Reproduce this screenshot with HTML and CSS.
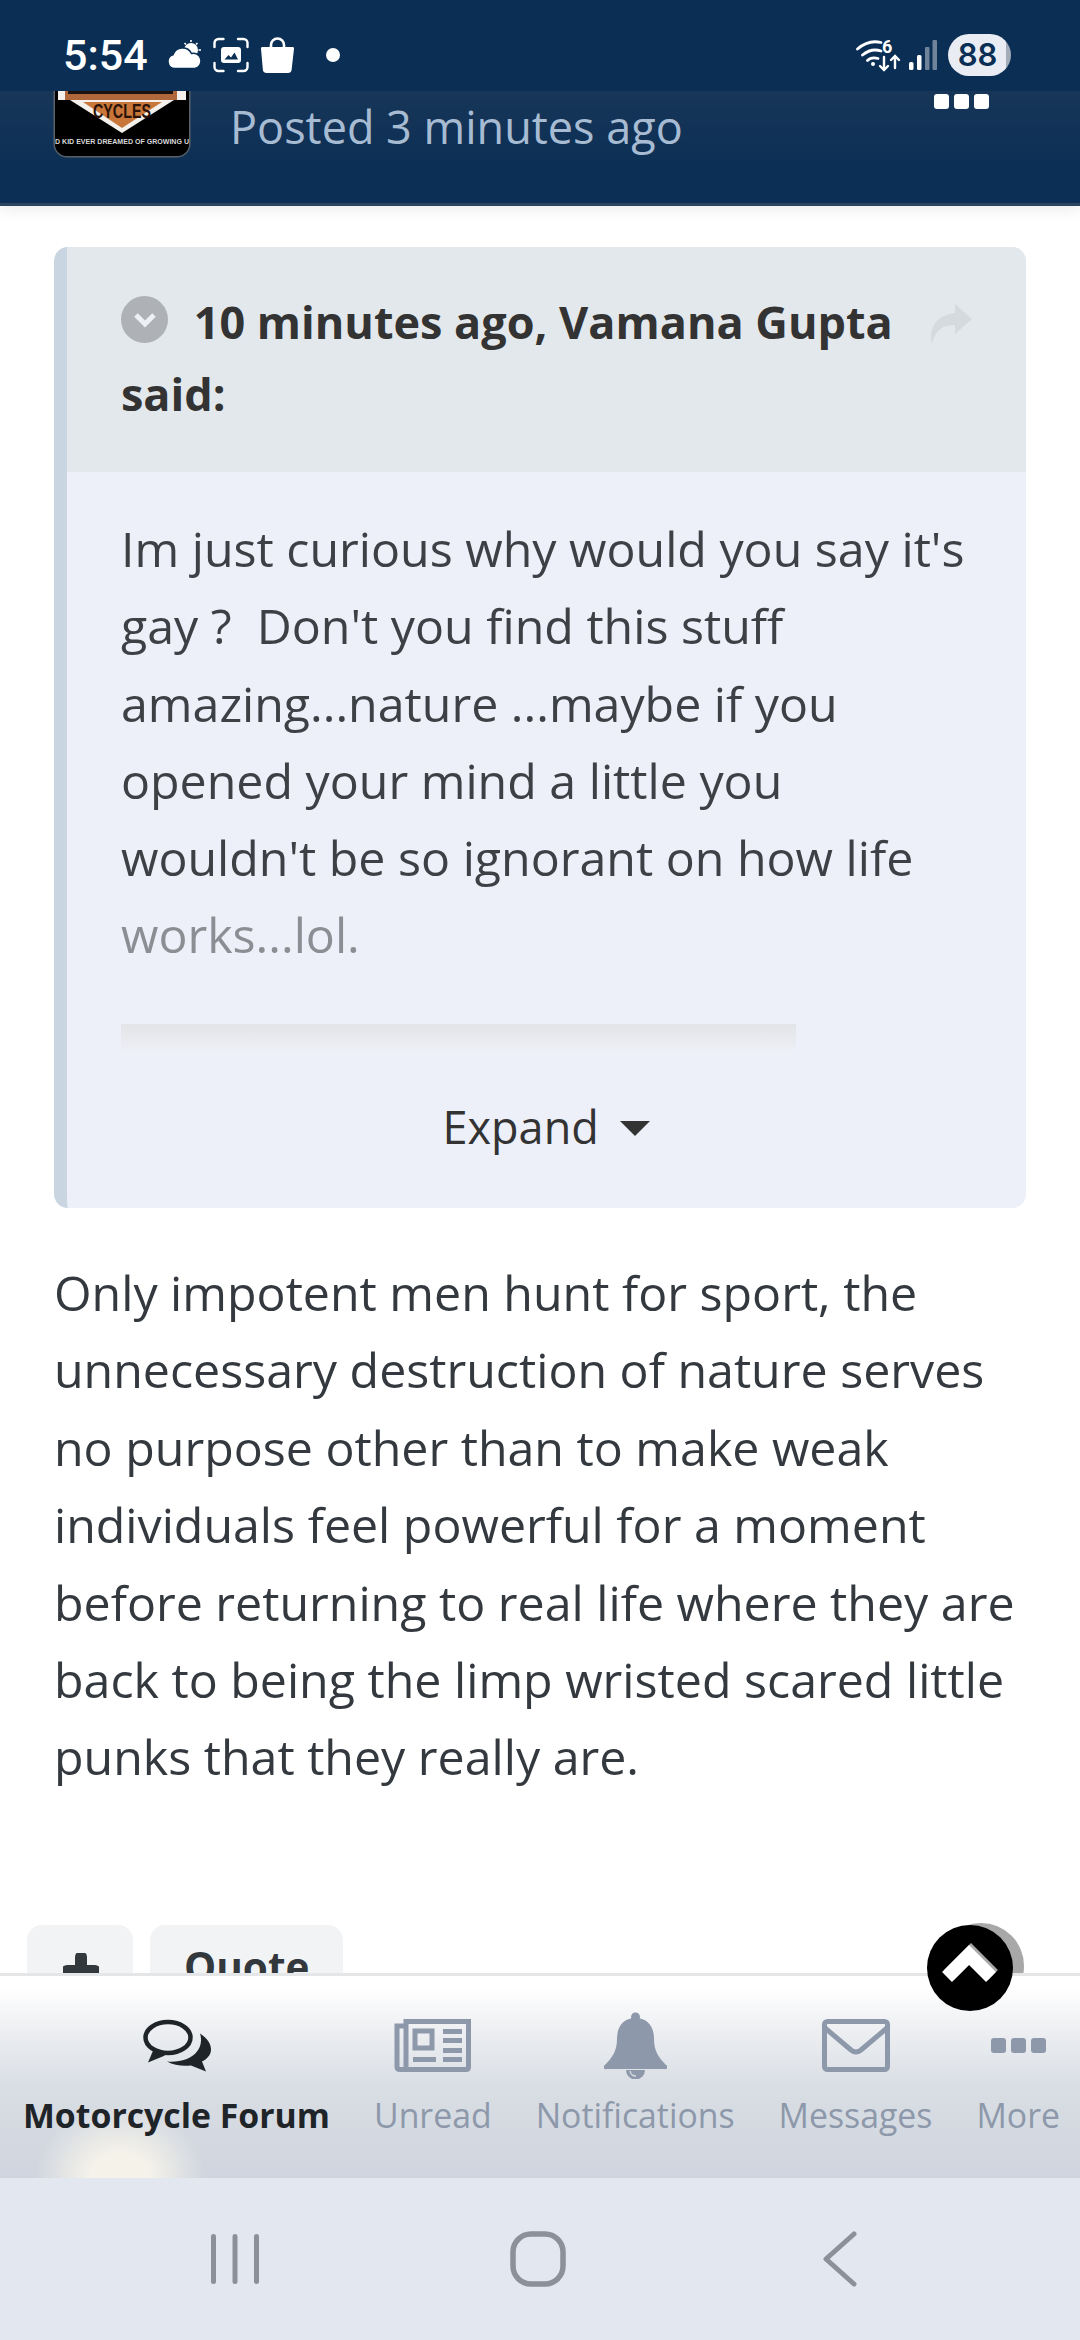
FILE: index.html

```html
<!DOCTYPE html>
<html lang="en">
<head>
  <meta charset="UTF-8">
  <title>Motorcycle Forum</title>
  <link rel="stylesheet" href="styles.css">
</head>
<body>
  <div class="status-bar">
    <span class="status-time">5:54</span>
    <svg class="st-cloud" width="34" height="30" viewBox="0 0 34 30">
      <circle cx="23" cy="10" r="7" fill="#fff"/>
      <path d="M23 0v2M29.500 3l-1.500 1.500M33 10h-2.500M31 17l-2-1.500M16.500 3L18 4.500" stroke="#fff" stroke-width="1.600" fill="none"/>
      <path d="M7 28.500A7 7 0 0 1 5 14.800A10 10 0 0 1 23.500 13.500A7.500 7.500 0 0 1 27 28.500Z" fill="#fff" stroke="#0a2e54" stroke-width="1.500"/>
    </svg>
    <svg class="st-scan" width="36" height="36" viewBox="0 0 36 36" fill="none">
      <path d="M1.500 10V6a4 4 0 0 1 4-4h5M25 2h5.500a4 4 0 0 1 4 4v4M34.500 26v4a4 4 0 0 1-4 4H25M10.500 34h-5a4 4 0 0 1-4-4v-4" stroke="#fff" stroke-width="2.400" stroke-linecap="round"/>
      <rect x="8" y="10" width="20" height="16" rx="3" fill="#fff"/>
      <path d="M11.500 22.500l4-4.500 2.500 2.500 3.500-5 3.500 7z" fill="#0a2e54"/>
    </svg>
    <svg class="st-bag" width="33" height="36" viewBox="0 0 33 36">
      <path d="M10 11V8a6.500 6.500 0 0 1 13 0v3" fill="none" stroke="#fff" stroke-width="2.600"/>
      <path d="M1.500 10h30a1.500 1.500 0 0 1 1.500 1.700l-2.300 20.300a4 4 0 0 1-4 4H5.800a4 4 0 0 1-4-4L0 11.700A1.500 1.500 0 0 1 1.500 10z" fill="#fff"/>
    </svg>
    <span class="status-dot"></span>
    <span class="status-right">
      <svg width="45" height="34" viewBox="0 0 45 34" fill="none" stroke="#fff" stroke-linecap="round">
        <path d="M1.500 11C9 4.500 17 2.500 25 4.500M6.500 17C12 12.500 19 11 25 13M11.500 22.500C14 20 18 19.500 22 20.500" stroke-width="2.800"/>
        <circle cx="17" cy="26" r="2" fill="#fff" stroke="none"/>
        <path d="M28 19v13M24 28l4 4 4-4M39 30V18M35 22l4-4 4 4" stroke-width="2.400"/>
        <text x="26" y="15" class="wifi-six">6</text>
      </svg>
      <svg class="st-signal" width="28" height="30" viewBox="0 0 28 30">
        <rect x="0" y="22" width="4.500" height="8" rx="1.500" fill="#fff"/>
        <rect x="8" y="15" width="4.500" height="15" rx="1.500" fill="#fff"/>
        <rect x="16" y="7" width="4.500" height="23" rx="1" fill="#6f839a"/>
        <rect x="23.500" y="0" width="4.500" height="30" rx="1" fill="#6f839a"/>
      </svg>
      <span class="battery">88</span>
    </span>
  </div>

  <header class="post-head">
    <svg class="avatar" width="134" height="134" viewBox="0 0 134 134">
      <rect width="134" height="134" fill="#000"/>
      <path d="M3 60H131V78H119L67 111 15 78H3z" fill="#f4f1ec"/>
      <rect x="10" y="60" width="112" height="18" fill="#b0673c"/>
      <rect x="13" y="60" width="105" height="12" fill="#1b1310"/>
      <path d="M28 80H107L67 106z" fill="#c8763a"/>
      <text x="38" y="96" class="avatar-cycles" textLength="58" lengthAdjust="spacingAndGlyphs">CYCLES</text>
      <text x="0" y="122" class="avatar-tag" textLength="134" lengthAdjust="spacingAndGlyphs">D KID EVER DREAMED OF GROWING U</text>
    </svg>
    <span class="posted">Posted 3 minutes ago</span>
    <span class="dots dots-white"><i></i><i></i><i></i></span>
  </header>

  <main class="content">
    <span class="scroll-shade"></span>
    <blockquote class="quote">
      <div class="quote-head">
        <span class="quote-toggle">
          <svg width="24" height="16" viewBox="0 0 24 16"><path d="M3 3l9 9 9-9" fill="none" stroke="#eef0f3" stroke-width="5"/></svg>
        </span>
        <strong>10 minutes ago, Vamana Gupta said:</strong>
        <svg class="quote-share" width="44" height="40" viewBox="0 0 44 40"><path d="M27 0l17 15-17 15v-9C15 21 7 26 4 40 0 24 9 11 27 9z" fill="#d5dade"/></svg>
      </div>
      <div class="quote-body">
        <p>Im just curious why would you say it's gay ?&nbsp; Don't you find this stuff amazing...nature ...maybe if you opened your mind a little you wouldn't be so ignorant on how life <span class="faded">works...lol.</span></p>
        <div class="embed-stub"></div>
        <div class="expand">Expand <i class="caret"></i></div>
      </div>
    </blockquote>

    <p class="post-text">Only impotent men hunt for sport, the unnecessary destruction of nature serves no purpose other than to make weak individuals feel powerful for a moment before returning to real life where they are back to being the limp wristed scared little punks that they really are.</p>

    <div class="actions">
      <span class="btn btn-plus">
        <svg width="36" height="36" viewBox="0 0 36 36"><path d="M12 4a6 6 0 0 1 12 0v8h8a6 6 0 0 1 0 12h-8v8a6 6 0 0 1-12 0v-8H4a6 6 0 0 1 0-12h8z" fill="#33383d"/></svg>
      </span>
      <span class="btn">Quote</span>
    </div>
  </main>

  <nav class="tabs">
    <a class="tab tab-active">
      <svg width="68" height="52" viewBox="0 0 68 52">
        <ellipse cx="25" cy="18" rx="22.500" ry="15.500" fill="none" stroke="#1f2429" stroke-width="4.500"/>
        <path d="M11 29L5 43 22 36z" fill="#1f2429"/>
        <path d="M57 14C65 19 68 25 68 30 68 36 63 40 59 42L63 52 48 46C40 47 31 46 24 42 36 43 48 40 54 32 58 27 59 20 57 14z" fill="#1f2429"/>
      </svg>
      <span>Motorcycle Forum</span>
    </a>
    <a class="tab">
      <svg width="77" height="53" viewBox="0 0 77 53" fill="#8d98aa">
        <path d="M11 7H3V47.500Q3 50.500 6 50.500H72Q74.500 50.500 74.500 48V2.500H12V48" fill="none" stroke="#8d98aa" stroke-width="5"/>
        <rect x="21" y="12" width="17" height="17" fill="none" stroke="#8d98aa" stroke-width="5"/>
        <rect x="49" y="10" width="19" height="5"/>
        <rect x="49" y="19" width="19" height="5"/>
        <rect x="49" y="29" width="19" height="5"/>
        <rect x="49" y="38" width="19" height="5"/>
        <rect x="19" y="38" width="23" height="5"/>
      </svg>
      <span>Unread</span>
    </a>
    <a class="tab">
      <svg width="63" height="67" viewBox="0 0 63 67" fill="#8d98aa">
        <circle cx="31.500" cy="5" r="4.500"/>
        <path d="M31.500 6C44 6 50 15 50 27 50 39 55 46 62 53A2 2 0 0 1 60.500 57H2.500A2 2 0 0 1 1 53C8 46 13 39 13 27 13 15 19 6 31.500 6z"/>
        <path d="M22 58H41A9.500 9.500 0 0 1 22 58z"/>
        <path d="M26 59A6 6 0 0 0 32 64" fill="none" stroke="#d8dde4" stroke-width="1.500"/>
      </svg>
      <span>Notifications</span>
    </a>
    <a class="tab">
      <svg width="68" height="53" viewBox="0 0 68 53" fill="none" stroke="#8d98aa" stroke-width="5">
        <rect x="2.500" y="2.500" width="63" height="48" rx="3"/>
        <path d="M3 9L29 31Q34 35 39 31L65 9"/>
      </svg>
      <span>Messages</span>
    </a>
    <a class="tab">
      <span class="tab-icon-box"><span class="dots dots-grey"><i></i><i></i><i></i></span></span>
      <span>More</span>
    </a>
  </nav>

  <div class="system-nav">
    <svg width="50" height="52" viewBox="0 0 50 52" fill="#8b9099">
      <rect x="0" y="1" width="5" height="50" rx="2.500"/>
      <rect x="21.500" y="1" width="5" height="50" rx="2.500"/>
      <rect x="43" y="1" width="5" height="50" rx="2.500"/>
    </svg>
    <svg width="56" height="56" viewBox="0 0 56 56" fill="none" stroke="#8b9099" stroke-width="5.500">
      <rect x="3" y="3" width="50" height="50" rx="18"/>
    </svg>
    <svg width="36" height="56" viewBox="0 0 36 56" fill="none" stroke="#8b9099" stroke-width="5" stroke-linecap="round" stroke-linejoin="round">
      <path d="M32 3L4 28 32 53" />
    </svg>
  </div>

  <span class="scroll-top">
    <svg width="86" height="86" viewBox="0 0 86 86" fill="none" stroke-width="14">
      <path d="M22 50L44 28 66 50" stroke="#a8a8a8"/>
      <path d="M20 52L42 30 64 52" stroke="#fff"/>
    </svg>
  </span>
</body>
</html>
```

FILE: styles.css

```css
* {
  box-sizing: border-box;
}
body {
  margin: 0;
  width: 1080px;
  height: 2340px;
  position: relative;
  overflow: hidden;
  display: flex;
  flex-direction: column;
  background: #fff;
  color: #353c41;
  font-family: "Open Sans", sans-serif;
}

/* status bar */
.status-bar {
  height: 91px;
  flex: none;
  display: flex;
  align-items: center;
  padding: 19px 69px 0 63px;
  background: #0a2e54;
  position: relative;
  z-index: 2;
}
.status-time {
  font-family: Roboto, sans-serif;
  font-weight: 500;
  font-size: 43px;
  color: #fff;
  width: 105px;
}
.st-scan {
  margin-left: 11px;
}
.st-bag {
  margin-left: 12px;
}
.status-dot {
  width: 14px;
  height: 14px;
  border-radius: 50%;
  background: #fff;
  margin-left: 32px;
}
.status-right {
  margin-left: auto;
  display: flex;
  align-items: center;
}
.st-signal {
  margin-left: 8px;
}
.wifi-six {
  font-family: Roboto, sans-serif;
  font-size: 18px;
  font-weight: 700;
  fill: #fff;
  stroke: none;
}
.battery {
  width: 63px;
  height: 42px;
  margin-left: 11px;
  border-radius: 21px;
  background: linear-gradient(90deg, #e9edf3 92%, #a3adb9 92%);
  color: #0a2e54;
  font-family: Inter, sans-serif;
  font-weight: 600;
  font-size: 31px;
  line-height: 42px;
  padding-right: 4px;
  text-align: center;
}

/* post header */
.post-head {
  height: 115px;
  flex: none;
  display: flex;
  align-items: flex-end;
  padding: 0 91px 0 55px;
  overflow: hidden;
  background: linear-gradient(#173658, #0c2f55 70%);
  border-bottom: 3px solid #2b4560;
  box-shadow: 0 4px 14px rgba(0, 0, 0, .08);
  position: relative;
  z-index: 1;
}
.avatar {
  flex: none;
  border-radius: 0 0 12px 12px;
  box-shadow: 0 0 0 1.500px #5a6068;
  margin-bottom: 47px;
}
.avatar-cycles {
  font-family: "Liberation Sans", sans-serif;
  font-size: 21px;
  font-weight: 700;
  fill: #2a1208;
}
.avatar-tag {
  font-family: "Liberation Sans", sans-serif;
  font-size: 7.500px;
  font-weight: 700;
  fill: #d8d8d8;
}
.posted {
  margin: 0 0 49px 41px;
  font-size: 45px;
  line-height: 54px;
  color: #a7bbd2;
}
.dots {
  display: flex;
  gap: 5px;
}
.dots i {
  width: 15px;
  height: 15px;
  border-radius: 3px;
}
.dots-white {
  margin-left: auto;
  margin-bottom: 94px;
}
.dots-white i {
  background: #fff;
}
.dots-grey i {
  background: #8d98aa;
}

/* main column */
.content {
  flex: 1;
  min-height: 0;
  overflow: hidden;
  position: relative;
  padding: 41px 54px 0;
}
.quote {
  margin: 0;
  border-left: 13px solid #c9d5e1;
  border-radius: 14px;
  overflow: hidden;
  height: 961px;
  background: #edf0f8;
}
.quote-head {
  height: 225px;
  padding: 39px 120px 0 54px;
  background: #e3e8ec;
  position: relative;
  font-size: 45px;
  line-height: 72px;
  color: #333;
}
.quote-toggle {
  display: inline-flex;
  width: 47px;
  height: 47px;
  margin: 10px 14px 0 0;
  border-radius: 50%;
  background: #aeb1b5;
  align-items: center;
  justify-content: center;
  vertical-align: top;
}
.quote-share {
  position: absolute;
  right: 54px;
  top: 57px;
}
.quote-body {
  padding: 38px 54px 0;
  font-size: 48.300px;
  line-height: 77.300px;
  color: #3d4146;
}
.quote-body p {
  margin: 0;
}
.faded {
  color: #8b8e93;
}
.embed-stub {
  width: 675px;
  height: 27px;
  margin-top: 50px;
  background: linear-gradient(#e3e4e7, #ecedf2 80%, #edf0f8);
}
.expand {
  margin-top: 45px;
  font-size: 45px;
  text-align: center;
  line-height: 62px;
  color: #333;
}
.caret {
  display: inline-block;
  margin-left: 10px;
  vertical-align: 8px;
  border-top: 15px solid #333;
  border-left: 15px solid transparent;
  border-right: 15px solid transparent;
}
.post-text {
  margin: 46px 0 0;
  font-size: 48.300px;
  line-height: 77.400px;
  color: #33393e;
}
.actions {
  display: flex;
  gap: 17px;
  margin: 129px 0 0 -27px;
}
.btn {
  height: 90px;
  padding: 14px 34px 0;
  border-radius: 15px;
  background: #f2f3f5;
  color: #33383d;
  font-size: 40.500px;
  font-weight: 700;
  line-height: 56px;
}
.btn-plus {
  width: 106px;
  padding: 28px 0 0 36px;
}
.btn-plus svg {
  display: block;
}
.scroll-shade {
  position: absolute;
  left: 938px;
  top: 1717px;
  width: 86px;
  height: 86px;
  border-radius: 50%;
  background: #a8a8a8;
}

/* tab bar */
.tabs {
  height: 205px;
  flex: none;
  display: flex;
  gap: 44px;
  padding: 36px 0 0 23px;
  border-top: 3px solid #e5e6e8;
  background:
    radial-gradient(ellipse 85px 72px at 120px 202px, #f5f2ea 35%, rgba(245, 242, 234, 0) 100%),
    linear-gradient(#fff 6%, #eceef1 28%, #d9dee4 55%, #cfd5de);
}
.tab {
  display: flex;
  flex-direction: column;
  align-items: center;
  color: #8d98aa;
  font-size: 33.800px;
  line-height: 45px;
  white-space: nowrap;
}
.tab svg {
  flex: none;
  height: 67px;
  margin-bottom: 14px;
}
.tab-icon-box {
  display: flex;
  align-items: center;
  height: 67px;
  margin-bottom: 14px;
}
.tab-active {
  color: #1f2429;
  font-weight: 700;
}

/* android nav */
.system-nav {
  flex: none;
  height: 162px;
  display: grid;
  grid-template-columns: repeat(3, 302px);
  justify-content: center;
  justify-items: center;
  align-items: center;
  padding: 0 5px 0 0;
  background: #e3e8f0;
}

.scroll-top {
  position: absolute;
  left: 927px;
  top: 1925px;
  width: 86px;
  height: 86px;
  border-radius: 50%;
  background: #000;
  z-index: 3;
}
.scroll-top svg {
  display: block;
}
```
